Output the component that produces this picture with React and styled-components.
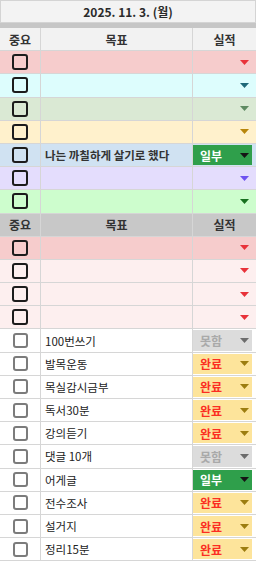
import React from "react";
import styled, { createGlobalStyle } from "styled-components";

const ROW_H = 23.2;

const GlobalStyle = createGlobalStyle`
  html, body {
    margin: 0;
    padding: 0;
    background: #ffffff;
  }
  body {
    font-family: "Noto Sans CJK KR", "Noto Sans", sans-serif;
    color: #222;
  }
`;

// 상단 고정 목표 (색깔별)
const topRows = [
  { bg: "#f6cccc", arrow: "#e8323a" },
  { bg: "#ddfdfd", arrow: "#1f6878" },
  { bg: "#dae9d4", arrow: "#5e8a62" },
  { bg: "#fff1cc", arrow: "#b8860b" },
  { bg: "#d0e2f2", text: "나는 까칠하게 살기로 했다", bold: true, status: "일부" },
  { bg: "#e4ddfd", arrow: "#6e52f0" },
  { bg: "#cdfdcd", arrow: "#17701f" },
];

const pinkRows = [
  { bg: "#f6cccc", arrow: "#e8323a" },
  { bg: "#fdefef", arrow: "#e8323a" },
  { bg: "#fdefef", arrow: "#e8323a" },
  { bg: "#fdefef", arrow: "#e8323a" },
];

const todoRows = [
  { text: "100번쓰기", status: "못함" },
  { text: "발목운동", status: "완료" },
  { text: "목실감시금부", status: "완료" },
  { text: "독서30분", status: "완료" },
  { text: "강의듣기", status: "완료" },
  { text: "댓글 10개", status: "못함" },
  { text: "어게글", status: "일부" },
  { text: "전수조사", status: "완료" },
  { text: "설거지", status: "완료" },
  { text: "정리15분", status: "완료" },
];

const chipColors = {
  완료: { bg: "#fde49b", fg: "#fb2e22", arrow: "#9c7d10" },
  못함: { bg: "#dcdcdc", fg: "#a9a9a9", arrow: "#6c6c6c" },
  일부: { bg: "#2f9f4b", fg: "#ffffff", arrow: "#151515" },
};

const Arrow = ({ color }) => (
  <svg width="9" height="5" viewBox="0 0 9 5">
    <path d="M0 0 L9 0 L4.5 5 Z" fill={color} />
  </svg>
);

const StatusCell = ({ status, arrow }) => {
  if (!status) {
    return (
      <ResultCell>
        <ArrowSlot>
          <Arrow color={arrow} />
        </ArrowSlot>
      </ResultCell>
    );
  }
  const c = chipColors[status];
  return (
    <ResultCell>
      <Chip $bg={c.bg} $fg={c.fg}>
        <span>{status}</span>
        <Arrow color={c.arrow} />
      </Chip>
    </ResultCell>
  );
};

const HeaderRow = ({ dark }) => (
  <Row $bg={dark ? "#c8c8c8" : "#f2f2f2"}>
    <HeadCell>중요</HeadCell>
    <HeadCell>목표</HeadCell>
    <HeadCell>실적</HeadCell>
  </Row>
);

const GoalRow = ({ row, light }) => (
  <Row $bg={row.bg || "#ffffff"}>
    <CheckCell>
      <CheckBox $light={light} />
    </CheckCell>
    <GoalCell $bold={row.bold}>{row.text}</GoalCell>
    <StatusCell status={row.status} arrow={row.arrow} />
  </Row>
);

const App = () => {
  return (
    <>
      <GlobalStyle />
      <Page>
        <TitleBar>2025. 11. 3. (월)</TitleBar>
        <Strip />
        <HeaderRow />
        {topRows.map((row, i) => (
          <GoalRow key={"t" + i} row={row} />
        ))}
        <HeaderRow dark />
        {pinkRows.map((row, i) => (
          <GoalRow key={"p" + i} row={row} />
        ))}
        {todoRows.map((row, i) => (
          <GoalRow key={"d" + i} row={row} light />
        ))}
      </Page>
    </>
  );
};

const Page = styled.div`
  width: 256px;
  height: 562px;
  overflow: hidden;
  display: flex;
  flex-direction: column;
`;

const TitleBar = styled.div`
  height: 23px;
  box-sizing: border-box;
  border: 1px solid #d4d4d4;
  background: #f3f3f3;
  display: flex;
  align-items: center;
  justify-content: center;
  font-size: 12px;
  font-weight: 700;
  color: #2a2a2a;
`;

const Strip = styled.div`
  height: 5px;
  background: #c6c6c6;
`;

const Row = styled.div`
  flex: 0 0 ${ROW_H}px;
  height: ${ROW_H}px;
  box-sizing: border-box;
  display: grid;
  grid-template-columns: 41px 152px 1fr;
  background: ${(p) => p.$bg};
  border-bottom: 1px solid #d6d6d6;
`;

const Cell = styled.div`
  box-sizing: border-box;
  border-right: 1px solid #d6d6d6;
  display: flex;
  align-items: center;
  min-width: 0;
  &:last-child {
    border-right: none;
  }
`;

const HeadCell = styled(Cell)`
  justify-content: center;
  font-size: 12px;
  font-weight: 700;
  color: #333;
`;

const CheckCell = styled(Cell)`
  justify-content: center;
`;

const CheckBox = styled.div`
  width: ${(p) => (p.$light ? 15 : 16)}px;
  height: ${(p) => (p.$light ? 15 : 16)}px;
  box-sizing: border-box;
  border: 2px solid ${(p) => (p.$light ? "#7c7c7c" : "#1c1c1c")};
  border-radius: 3px;
`;

const GoalCell = styled(Cell)`
  padding-left: 4px;
  font-size: 11.5px;
  font-weight: ${(p) => (p.$bold ? 700 : 400)};
  color: ${(p) => (p.$bold ? "#333" : "#222")};
  white-space: nowrap;
  overflow: hidden;
`;

const ResultCell = styled(Cell)`
  align-items: stretch;
`;

const ArrowSlot = styled.div`
  flex: 1;
  display: flex;
  align-items: center;
  justify-content: flex-end;
  padding-right: 7px;
`;

const Chip = styled.div`
  flex: 1;
  margin: 1px 4px 1px 0;
  padding: 0 3px 0 7px;
  display: flex;
  align-items: center;
  justify-content: space-between;
  background: ${(p) => p.$bg};
  color: ${(p) => p.$fg};
  font-size: 12px;
  font-weight: 700;
`;

export default App;
